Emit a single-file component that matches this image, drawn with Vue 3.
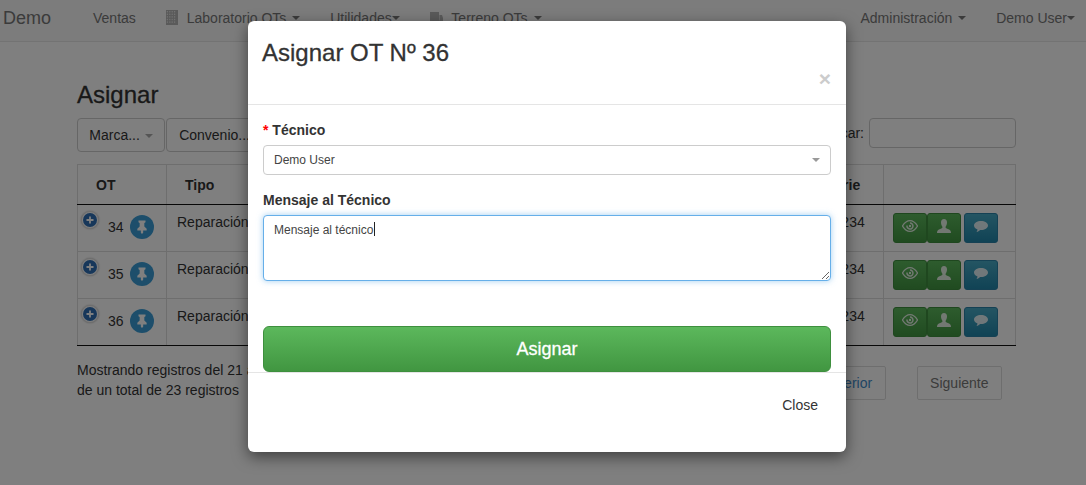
<script setup>
const rows = [34, 35, 36];
</script>

<template>
  <div class="page">
    <nav class="navbar">
      <a class="brand">Demo</a>
      <a class="nav-item">Ventas</a>
      <a class="nav-item">
        <svg class="nav-icon" width="12" height="15" viewBox="0 0 12 15">
          <rect width="12" height="15" fill="#b4b4b4" />
          <g fill="#e4e4e4">
            <template v-for="r in 5" :key="r">
              <rect v-for="c in 4" :key="c" :x="c * 2.4 - 1.6" :y="r * 2.6 - 1.6" width="1.2" height="1.4" />
            </template>
          </g>
        </svg>
        Laboratorio OTs <span class="caret spaced"></span>
      </a>
      <a class="nav-item">Utilidades<span class="caret"></span></a>
      <a class="nav-item">
        <svg class="nav-icon" width="13" height="12" viewBox="0 0 13 12">
          <path d="M0 0h9v9H0zM9.500 3H12l1 3v3H9.500z" fill="#b4b4b4" />
          <circle cx="3" cy="10" r="1.800" fill="#b4b4b4" />
          <circle cx="10" cy="10" r="1.800" fill="#b4b4b4" />
        </svg>
        Terreno OTs <span class="caret spaced"></span>
      </a>
      <div class="nav-right">
        <a class="nav-item">Administración <span class="caret spaced"></span></a>
        <a class="nav-item user">Demo User<span class="caret"></span></a>
      </div>
    </nav>

    <main class="content">
      <h3 class="title">Asignar</h3>

      <div class="filters">
        <div class="filter-btns">
          <button class="filter-btn">Marca... <span class="caret light"></span></button>
          <button class="filter-btn">Convenio... <span class="caret light"></span></button>
        </div>
        <label class="search">Buscar: <input class="search-input" type="text" /></label>
      </div>

      <table class="grid">
        <colgroup>
          <col class="c-ot" />
          <col class="c-tipo" />
          <col />
          <col class="c-serie" />
          <col class="c-actions" />
        </colgroup>
        <thead>
          <tr>
            <th>OT</th>
            <th>Tipo</th>
            <th></th>
            <th>Serie</th>
            <th></th>
          </tr>
        </thead>
        <tbody>
          <tr v-for="ot in rows" :key="ot">
            <td class="ot-cell">
              <div class="ot-inner">
                <span class="plus">
                  <svg width="14" height="14" viewBox="0 0 14 14">
                    <circle cx="7" cy="7" r="7" fill="#2f6fb5" />
                    <path d="M7 3.500v7M3.500 7h7" stroke="#fff" stroke-width="1.800" />
                  </svg>
                </span>
                <span class="ot-num">{{ ot }}</span>
                <span class="pin">
                  <svg width="14" height="16" viewBox="0 0 24 24">
                    <path d="M6 1h12v3l-2 1v6l4 4v3h-6v4l-2 2-2-2v-4H4v-3l4-4V5L6 4z" fill="#fff" />
                  </svg>
                </span>
              </div>
            </td>
            <td>Reparación</td>
            <td></td>
            <td>001234</td>
            <td class="actions">
              <div class="action-group">
                <button class="act green">
                  <svg width="16" height="12" viewBox="0 0 16 12">
                    <path d="M.5 6C3 2 5.500.7 8 .7S13 2 15.500 6C13 10 10.500 11.300 8 11.300S3 10 .5 6z" fill="none" stroke="#fff" stroke-width="1.300" />
                    <path d="M5 5.500a3 3 0 1 0 3-2.500" fill="none" stroke="#fff" stroke-width="1.500" />
                    <circle cx="8" cy="6" r="1.200" fill="#fff" />
                  </svg>
                </button>
                <button class="act green">
                  <svg width="14" height="14" viewBox="0 0 14 14">
                    <path d="M7 0c2 0 3 1.500 3 3.500S9 7 8.500 8c0 1 1 1.500 3 2.300 1.500.6 2.500 1.500 2.500 3.700H0c0-2.200 1-3.100 2.500-3.700 2-.8 3-1.300 3-2.300C5 7 4 5.500 4 3.500S5 0 7 0z" fill="#fff" />
                  </svg>
                </button>
                <button class="act blue">
                  <svg width="14" height="13" viewBox="0 0 14 13">
                    <path d="M7 1c3.800 0 7 1.900 7 4.500S10.800 10 7 10H6c-.8 1-2 1.700-3.500 2 .6-.8.9-1.500 1-2.500C1.500 8.800 0 7.300 0 5.500 0 2.900 3.200 1 7 1z" fill="#fff" />
                  </svg>
                </button>
              </div>
            </td>
          </tr>
        </tbody>
      </table>

      <div class="table-foot">
        <div class="info">
          Mostrando registros del 21 al 23<br />de un total de 23 registros
        </div>
        <div class="pager">
          <a class="page-btn link">Anterior</a>
          <a class="page-btn">Siguiente</a>
        </div>
      </div>
    </main>

    <div class="backdrop"></div>

    <div class="modal">
      <div class="modal-header">
        <h3 class="modal-title">Asignar OT Nº 36</h3>
        <span class="close-x">×</span>
      </div>
      <div class="modal-body">
        <label class="field-label"><span class="req">*</span> Técnico</label>
        <div class="select">
          <span>Demo User</span>
          <span class="select-caret"></span>
        </div>
        <label class="field-label second">Mensaje al Técnico</label>
        <div class="area-wrap">
          <textarea class="area" readonly>Mensaje al técnico</textarea>
          <span class="text-caret"></span>
        </div>
        <button class="submit">Asignar</button>
      </div>
      <div class="modal-footer">
        <a class="close-link">Close</a>
      </div>
    </div>
  </div>
</template>

<style>
html,
body {
  margin: 0;
  background: #fff;
}
</style>

<style scoped>
.page {
  position: relative;
  width: 1086px;
  height: 485px;
  overflow: hidden;
  font-family: "Liberation Sans", Arial, sans-serif;
  font-size: 14px;
  line-height: 20px;
  color: #333;
  background: #fff;
}

.navbar {
  display: flex;
  align-items: center;
  height: 41px;
  padding-top: 0;
  background: #f8f8f8;
  border-bottom: 1px solid #e7e7e7;
  color: #777;
}

.brand {
  font-size: 18px;
  padding: 0 15px 0 3px;
  margin-right: 12px;
  position: relative;
  top: -3px;
}

.nav-item {
  display: flex;
  align-items: center;
  padding: 0 15px;
  white-space: pre;
  position: relative;
  top: -3px;
}

.nav-icon {
  margin-right: 5px;
}

.nav-right {
  display: flex;
  margin-left: auto;
}

.user {
  padding-right: 11px;
}

.caret {
  display: inline-block;
  width: 0;
  height: 0;
  margin-left: 0;
  border-top: 4px solid #777;
  border-left: 4px solid transparent;
  border-right: 4px solid transparent;
}

.caret.spaced {
  margin-left: 2px;
}

.caret.light {
  border-top-color: #aaa;
  margin-left: 1px;
  vertical-align: middle;
}

.content {
  padding: 0 70px 0 77px;
}

.title {
  margin: 40px 0 10px;
  font-size: 24px;
  line-height: 26px;
  font-weight: 500;
  -webkit-text-stroke: 0.3px #333;
}

.filters {
  display: flex;
  justify-content: space-between;
  align-items: flex-start;
  height: 46px;
}

.filter-btns {
  display: flex;
  gap: 1px;
}

.filter-btn {
  height: 34px;
  width: 88px;
  padding: 0;
  border: 1px solid #ccc;
  border-radius: 4px;
  background: #fff;
  color: #333;
  font: inherit;
  white-space: nowrap;
}

.filter-btn + .filter-btn {
  width: 110px;
}

.search {
  display: flex;
  align-items: center;
  gap: 5px;
  height: 30px;
  padding-top: 0;
}

.search-input {
  width: 147px;
  height: 30px;
  box-sizing: border-box;
  border: 1px solid #ccc;
  border-radius: 4px;
  background: #fff;
}

.grid {
  width: 939px;
  table-layout: fixed;
  border-collapse: collapse;
  border: 1px solid #ddd;
  border-bottom: 1px solid #111;
}

.c-ot {
  width: 89px;
}

.c-tipo {
  width: 120px;
}

.c-serie {
  width: 76px;
}

.c-actions {
  width: 132px;
}

.grid th {
  height: 40px;
  padding: 0 18px;
  text-align: left;
  font-weight: bold;
  border: 1px solid #ddd;
  border-bottom: 1px solid #111;
  box-sizing: border-box;
}

.grid td {
  height: 47px;
  box-sizing: border-box;
  padding: 7px 10px;
  vertical-align: top;
  border: 1px solid #ddd;
}

.grid tbody tr:last-child td {
  border-bottom: 1px solid #111;
}

.grid td.ot-cell {
  padding: 0 0 0 3px;
}

.ot-inner {
  display: flex;
  align-items: flex-start;
  padding-top: 6px;
}

.plus {
  display: flex;
  align-items: center;
  justify-content: center;
  width: 18px;
  height: 18px;
  border-radius: 50%;
  background: #fff;
  box-shadow: 0 0 2px #bbb;
  border: 1px solid #ddd;
  box-sizing: border-box;
}

.ot-num {
  margin: 6px 6px 0 9px;
}

.pin {
  display: flex;
  align-items: center;
  justify-content: center;
  width: 24px;
  height: 24px;
  margin-top: 4px;
  border-radius: 50%;
  background: #3a9dd6;
}

.grid td.actions {
  padding: 8px 0 0 9px;
}

.action-group {
  display: flex;
}

.act {
  display: flex;
  align-items: center;
  justify-content: center;
  width: 34px;
  height: 30px;
  padding: 0 0 4px;
  border-radius: 3px;
}

.act.green {
  background: linear-gradient(#5cb85c, #419641);
  border: 1px solid #3e8f3e;
}

.act.blue {
  margin-left: 3px;
  background: linear-gradient(#48aac6, #2186aa);
  border: 1px solid #2b82a8;
}

.act svg {
  opacity: 0.85;
}

.table-foot {
  display: flex;
  justify-content: space-between;
  align-items: flex-start;
  padding-top: 14px;
}

.info {
  padding-top: 0;
  margin-top: 0;
}

.pager {
  display: flex;
  gap: 31px;
  margin: 6px 14px 0 0;
}

.page-btn {
  box-sizing: border-box;
  height: 34px;
  padding: 6px 12.500px;
  border: 1px solid #ddd;
  border-radius: 2px;
  color: #777;
}

.page-btn.link {
  color: #428bca;
}

.backdrop {
  position: absolute;
  inset: 0;
  background: rgba(0, 0, 0, 0.5);
}

.modal {
  position: absolute;
  left: 248px;
  top: 21px;
  width: 598px;
  height: 431px;
  display: flex;
  flex-direction: column;
  background: #fff;
  border-radius: 6px;
  box-shadow: 0 5px 15px rgba(0, 0, 0, 0.5);
}

.modal-header {
  position: relative;
  height: 83px;
  border-bottom: 1px solid #e5e5e5;
  box-sizing: content-box;
}

.modal-title {
  margin: 0;
  padding: 19px 14px 0;
  font-size: 24px;
  line-height: 26px;
  font-weight: 500;
  -webkit-text-stroke: 0.3px #333;
}

.close-x {
  position: absolute;
  right: 15px;
  top: 47px;
  font-size: 21px;
  line-height: 21px;
  font-weight: bold;
  color: #ccc;
}

.modal-body {
  padding: 15px 15px 0;
  height: 267px;
  box-sizing: border-box;
}

.field-label {
  display: block;
  font-weight: bold;
  height: 25px;
}

.field-label.second {
  margin-top: 15px;
}

.req {
  color: #f00;
}

.select {
  display: flex;
  align-items: center;
  justify-content: space-between;
  height: 30px;
  box-sizing: border-box;
  padding: 0 10px;
  border: 1px solid #ccc;
  border-radius: 4px;
  font-size: 12px;
  color: #444;
}

.select-caret {
  width: 0;
  height: 0;
  border-top: 4px solid #999;
  border-left: 4px solid transparent;
  border-right: 4px solid transparent;
}

.area-wrap {
  position: relative;
  height: 66px;
}

.area {
  display: block;
  width: 100%;
  height: 66px;
  box-sizing: border-box;
  padding: 5px 10px;
  border: 1px solid #66afe9;
  border-radius: 4px;
  outline: none;
  box-shadow: 0 0 6px rgba(102, 175, 233, 0.6);
  font-family: inherit;
  font-size: 12px;
  line-height: 18px;
  color: #444;
}

.text-caret {
  position: absolute;
  left: 111px;
  top: 7px;
  width: 1px;
  height: 14px;
  background: #222;
}

.submit {
  display: block;
  width: 100%;
  height: 46px;
  margin-top: 45px;
  border: 1px solid #3e8f3e;
  border-radius: 6px;
  background: linear-gradient(#5cb85c 0%, #419641 100%);
  color: #fff;
  font-family: inherit;
  font-size: 18px;
  font-weight: 500;
  -webkit-text-stroke: 0.3px #fff;
}

.modal-footer {
  flex: 1;
  display: flex;
  justify-content: flex-end;
  align-items: flex-start;
  border-top: 1px solid #e5e5e5;
  padding: 22px 28px 0 0;
}

.close-link {
  color: #333;
}
</style>
